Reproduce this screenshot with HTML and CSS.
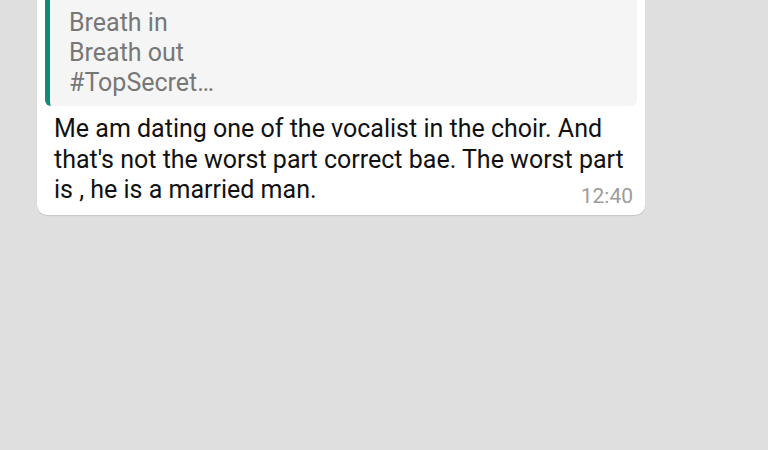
FILE: index.html
```html
<!DOCTYPE html>
<html>
<head>
<meta charset="utf-8">
<link rel="stylesheet" href="styles.css">
</head>
<body>
<div class="chat">
  <div class="bubble">
    <div class="quote">
      <div class="quote-text">Breath in<br>Breath out<br>#TopSecret…</div>
    </div>
    <div class="msg">
      <p class="msg-text">Me am dating one of the vocalist in the choir. And that's not the worst part correct bae. The worst part is , he is a married man.<span class="time">12:40</span></p>
    </div>
  </div>
</div>
</body>
</html>
```

FILE: styles.css
```css
html, body {
  margin: 0;
  padding: 0;
  background: #dfdfdf;
  width: 768px;
  height: 450px;
  overflow: hidden;
  font-family: Roboto, "Noto Sans", sans-serif;
}

.chat {
  padding-left: 37px;
}

.bubble {
  width: 608px;
  box-sizing: border-box;
  margin-top: -14px;
  background: #ffffff;
  border-radius: 10px;
  padding: 8px 8px 0 8px;
  box-shadow: 0 1px 1px rgba(0, 0, 0, 0.12);
}

.quote {
  background: #f5f5f5;
  border-left: 5px solid #118a7a;
  border-radius: 6px;
  padding: 14px 10px 8px 19px;
}

.quote-text {
  font-size: 25px;
  line-height: 30px;
  color: #777777;
}

.msg {
  padding: 8px 4px 7px 9px;
}

.msg-text {
  display: flow-root;
  margin: 0;
  font-size: 25px;
  line-height: 30.5px;
  color: #111111;
}

.time {
  float: right;
  margin-top: 9px;
  font-size: 21px;
  line-height: 24px;
  color: #9c9c9c;
}
```
